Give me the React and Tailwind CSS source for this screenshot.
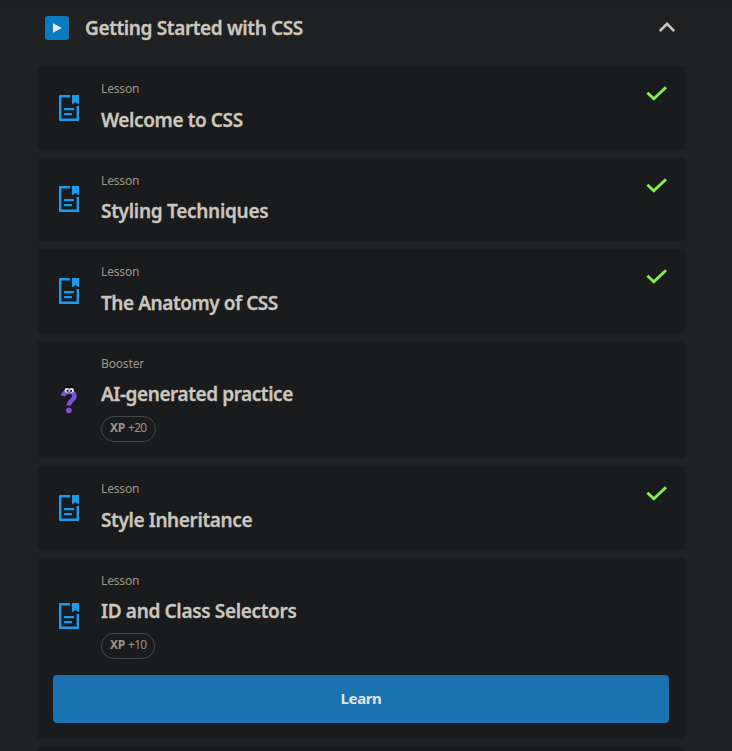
const lessons = [
  { kind: 'Lesson', title: 'Welcome to CSS', done: true, tracking: 'tracking-[-0.39px]' },
  { kind: 'Lesson', title: 'Styling Techniques', done: true, tracking: 'tracking-[-0.29px]' },
  { kind: 'Lesson', title: 'The Anatomy of CSS', done: true, tracking: 'tracking-[-0.44px]' },
  { kind: 'Booster', title: 'AI-generated practice', xp: '+20', tracking: 'tracking-[-0.43px]' },
  { kind: 'Lesson', title: 'Style Inheritance', done: true, tracking: 'tracking-[-0.38px]' },
  { kind: 'Lesson', title: 'ID and Class Selectors', xp: '+10', action: 'Learn', tracking: 'tracking-[-0.34px]' },
];

function LessonIcon() {
  return (
    <svg width="20" height="26" viewBox="0 0 20 26" fill="#169cf0">
      <path d="M0 0.8Q0 0 0.8 0H11V2.4H2.4V23.6H17.6V11H20V25.2Q20 26 19.2 26H0.8Q0 26 0 25.2Z" />
      <path d="M13 0H20V9.2L16.5 7L13 9.2Z" />
      <rect x="5" y="13" width="10" height="2.2" rx="0.5" />
      <rect x="5" y="18" width="8" height="2.2" rx="0.5" />
    </svg>
  );
}

function BoosterIcon() {
  return (
    <svg width="20" height="30" viewBox="0 0 20 30" fill="none">
      <path d="M3.8 11.8C5.4 6.6 15.6 6 15.6 12C15.6 16.2 10 16.2 9.9 21.6" stroke="#8250df" strokeWidth="4.4" />
      <circle cx="9.9" cy="26.4" r="2.8" fill="#8250df" />
      <path d="M6 4.8L8 2.8L10 3.5L12 1.8L14 4.8" stroke="#080d1c" strokeWidth="2" />
      <circle cx="8" cy="6.3" r="2.4" fill="#f0efeb" />
      <circle cx="12.5" cy="6.3" r="2.4" fill="#f0efeb" />
      <circle cx="8.6" cy="6.8" r="1.1" fill="#080d1c" />
      <circle cx="12.1" cy="6.8" r="1.1" fill="#080d1c" />
    </svg>
  );
}

function Card({ item }) {
  return (
    <article className="rounded-[4px] bg-[#1a1b1c]">
      <div className={`flex px-4 ${item.xp ? 'h-[117.4px]' : 'h-[83.6px]'}`}>
        <div className="flex w-8 items-center justify-center">
          {item.kind === 'Booster' ? <BoosterIcon /> : <LessonIcon />}
        </div>
        <div className="ml-4 flex-1 pt-[13px]">
          <p className="h-[26.6px] text-[12px] leading-[19px] tracking-[-0.15px] text-[#9d9488]">{item.kind}</p>
          <h3 className={`whitespace-nowrap text-[19px] font-semibold leading-7 text-[#cbc6be] [-webkit-text-stroke:0.3px_#cbc6be] ${item.tracking}`}>{item.title}</h3>
          {item.xp && (
            <div className={`mt-[7.8px] flex h-[26px] items-center gap-[3px] rounded-full border border-[#45484a] pb-0.5 pl-2 text-[12px] leading-4 tracking-[-0.8px] text-[#9d9488] ${item.action ? 'w-[54px]' : 'w-[55px]'}`}>
              <b className="font-bold tracking-[-0.2px]">XP</b>
              <span>{item.xp}</span>
            </div>
          )}
        </div>
        {item.done && (
          <svg className="mr-[2px] mt-5 overflow-visible" width="20" height="15" viewBox="0 0 20 15" fill="none">
            <path d="M0.4 6.8L6.8 12.8L19 1.2" stroke="#83f04f" strokeWidth="2.9" />
          </svg>
        )}
      </div>
      {item.action && (
        <div className="px-4 pb-4">
          <button className="block h-12 w-full rounded-[4px] bg-[#1b72b1] pb-0.5 text-[15px] font-bold tracking-[-0.4px] text-[#e6e4e0]">{item.action}</button>
        </div>
      )}
    </article>
  );
}

export default function App() {
  return (
    <main className="h-[751px] w-[732px] overflow-hidden bg-[#202122] font-['Noto_Sans','Open_Sans',sans-serif]">
      <div className="h-2 bg-[#1d1e1f]" />
      <header className="flex h-10 items-center pl-[45px] pr-[57px]">
        <svg width="24" height="24" viewBox="0 0 24 24">
          <rect width="24" height="24" rx="3" fill="#0b7bc1" />
          <path d="M8 7.2L16.8 12L8 16.8Z" fill="#e8e6e3" />
        </svg>
        <h2 className="ml-4 flex-1 whitespace-nowrap text-[19px] font-semibold leading-7 tracking-[-0.37px] text-[#cbc6be] [-webkit-text-stroke:0.3px_#cbc6be]">Getting Started with CSS</h2>
        <svg className="-mt-0.5" width="16" height="10" viewBox="0 0 16 10" fill="none">
          <path d="M0.8 9L8 1.8L15.2 9" stroke="#cbc6be" strokeWidth="2.6" />
        </svg>
      </header>
      <section className="ml-[37px] mt-[18px] flex w-[648px] flex-col gap-2">
        {lessons.map((item) => <Card key={item.title} item={item} />)}
        <div className="h-2 rounded-t-[4px] bg-[#1a1b1c]" />
      </section>
    </main>
  );
}
